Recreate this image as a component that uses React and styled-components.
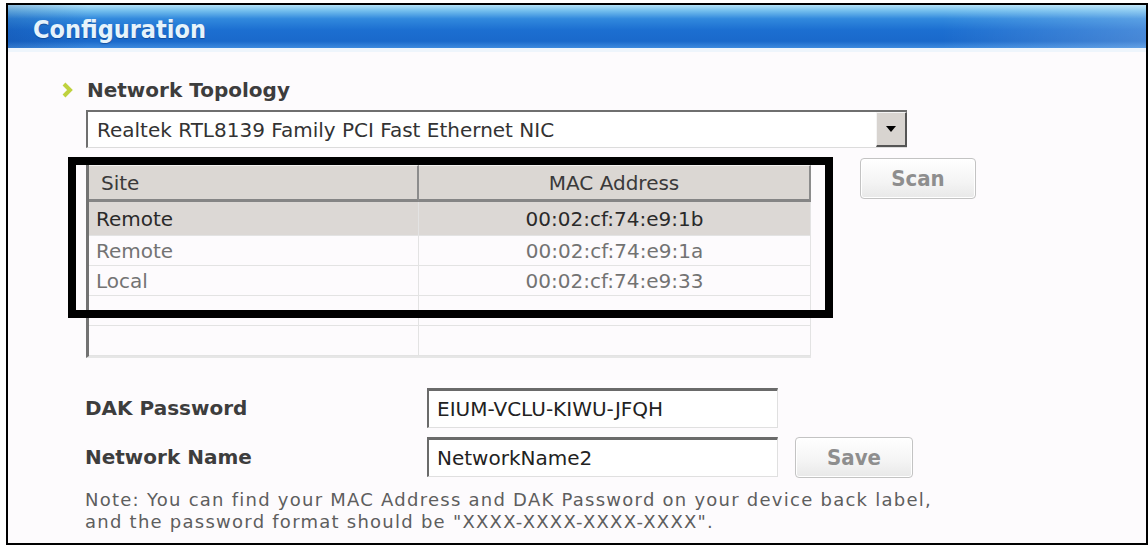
import React from 'react'
import styled, { createGlobalStyle } from 'styled-components'

const GlobalStyle = createGlobalStyle`
  html, body {
    margin: 0;
    padding: 0;
    background: #ffffff;
  }
  body {
    font-family: "DejaVu Sans", Verdana, sans-serif;
  }
`

const Page = styled.div`
  padding: 3px 0 0 6px;
`

const Frame = styled.div`
  box-sizing: border-box;
  width: 1142px;
  height: 542px;
  border: 2px solid #000;
  background: #fdfbfd;
  display: flex;
  flex-direction: column;
`

const Header = styled.div`
  box-sizing: border-box;
  height: 47px;
  border-bottom: 4px solid #eef5fc;
  padding: 5px 0 0 25px;
  display: flex;
  align-items: center;
  background:
    linear-gradient(90deg, rgba(10, 50, 130, 0.2) 0%, rgba(10, 50, 130, 0) 7%, rgba(255, 255, 255, 0) 82%, rgba(255, 255, 255, 0.2) 100%),
    linear-gradient(180deg, #b4e2f8 0%, #74bfee 13%, #3189dd 32%, #1c6fd1 58%, #1a69cb 84%, #3d8ade 100%);
`

const Title = styled.h1`
  margin: 0;
  font-family: "DejaVu Sans Condensed", "DejaVu Sans", sans-serif;
  font-stretch: condensed;
  font-weight: bold;
  font-size: 25px;
  color: #e6f3fb;
  text-shadow: 0 1px 1px rgba(0, 40, 100, 0.45);
`

const Body = styled.div`
  padding: 26px 0 0 54px;
`

const SectionTitle = styled.div`
  display: flex;
  align-items: center;
  gap: 14px;
  font-weight: bold;
  font-size: 20px;
  line-height: 24px;
  color: #3d3d3d;
`

const Section = styled.div`
  padding-left: 23px;
`

const Select = styled.div`
  box-sizing: border-box;
  margin: 8px 0 0 1px;
  width: 821px;
  height: 38px;
  display: flex;
  background: #fff;
  border-top: 2px solid #6f6f6f;
  border-left: 2px solid #6f6f6f;
  border-bottom: 1px solid #dcdcdc;
`

const SelectText = styled.div`
  flex: 1;
  display: flex;
  align-items: center;
  padding-left: 9px;
  font-size: 20px;
  color: #333;
`

const DropButton = styled.div`
  box-sizing: border-box;
  width: 31px;
  display: flex;
  align-items: center;
  justify-content: center;
  background: #d8d4d0;
  border-top: 1px solid #f4f4f4;
  border-left: 1px solid #f4f4f4;
  border-right: 2px solid #555;
  border-bottom: 2px solid #555;
`

const Arrow = styled.span`
  width: 0;
  height: 0;
  border-left: 5px solid transparent;
  border-right: 5px solid transparent;
  border-top: 6px solid #000;
`

const TableRow = styled.div`
  display: flex;
  align-items: flex-start;
  gap: 49px;
  margin: 10px 0 0 1px;
`

const TableWrap = styled.div`
  position: relative;
  margin-top: 7px;
  width: 725px;
`

const Grid = styled.table`
  width: 725px;
  table-layout: fixed;
  border-collapse: separate;
  border-spacing: 0;
  border-left: 3px solid #727272;
  border-bottom: 2px solid #e6e6e6;
  font-size: 20px;
`

const Th = styled.th`
  height: 33px;
  padding: 0 0 0 ${p => (p.$align === 'left' ? '12px' : '0')};
  text-align: ${p => p.$align};
  font-weight: normal;
  color: #3a3a3a;
  background: #dbd7d3;
  border-top: 1px solid #f2f1ef;
  border-bottom: 3px solid #858585;
  border-right: 2px solid #8c8c8c;
`

const Td = styled.td`
  height: ${p => (p.$selected ? '33px' : '29px')};
  padding: 0 0 0 ${p => (p.$align === 'left' ? '7px' : '0')};
  text-align: ${p => p.$align};
  color: ${p => (p.$selected ? '#2a2a2a' : '#737373')};
  background: ${p => (p.$selected ? '#dcd8d5' : 'transparent')};
  border-bottom: 1px solid #e3e3e3;
  border-right: 1px solid #e3e3e3;
`

const Highlight = styled.div`
  position: absolute;
  left: -18px;
  top: -8px;
  width: 765px;
  height: 161px;
  box-sizing: border-box;
  border: 8px solid #000;
  pointer-events: none;
`

const Button = styled.button`
  box-sizing: border-box;
  width: ${p => p.$w}px;
  height: 41px;
  padding: 0;
  border: 1px solid #c3c3c3;
  border-radius: 4px;
  background: linear-gradient(180deg, #ffffff 0%, #f4f4f4 60%, #e8e8e8 100%);
  box-shadow: inset 0 0 0 1px #ffffff;
  font-family: "DejaVu Sans Condensed", "DejaVu Sans", sans-serif;
  font-stretch: condensed;
  font-weight: bold;
  font-size: 22px;
  color: #8e8e8e;
`

const Form = styled.div`
  margin-top: 30px;
  display: grid;
  grid-template-columns: 325px 351px 118px;
  grid-auto-rows: 40px;
  column-gap: 17px;
  row-gap: 9px;
  align-items: center;
`

const Label = styled.div`
  font-weight: bold;
  font-size: 20px;
  color: #3d3d3d;
`

const Field = styled.div`
  box-sizing: border-box;
  height: 40px;
  display: flex;
  align-items: center;
  padding-left: 8px;
  background: #fff;
  border-top: 3px solid #6a6a6a;
  border-left: 2px solid #6a6a6a;
  border-right: 1px solid #e0e0e0;
  border-bottom: 1px solid #e0e0e0;
  font-size: 20px;
  color: #222;
`

const Note = styled.p`
  margin: 12px 0 0;
  font-size: 18px;
  line-height: 22px;
  letter-spacing: 1.25px;
  color: #5e5e5e;
`

const Bullet = () => (
  <svg width="11" height="16" viewBox="0 0 11 16">
    <polyline points="2,2 8,8 2,14" fill="none" stroke="#bfd23e" strokeWidth="4" />
  </svg>
)

const rows = [
  { site: 'Remote', mac: '00:02:cf:74:e9:1b', selected: true },
  { site: 'Remote', mac: '00:02:cf:74:e9:1a' },
  { site: 'Local', mac: '00:02:cf:74:e9:33' },
  { site: '', mac: '' },
  { site: '', mac: '' },
]

export default function App() {
  return (
    <Page>
      <GlobalStyle />
      <Frame>
        <Header>
          <Title>Configuration</Title>
        </Header>
        <Body>
          <SectionTitle>
            <Bullet />
            Network Topology
          </SectionTitle>
          <Section>
            <Select>
              <SelectText>Realtek RTL8139 Family PCI Fast Ethernet NIC</SelectText>
              <DropButton>
                <Arrow />
              </DropButton>
            </Select>
            <TableRow>
              <TableWrap>
                <Grid>
                  <colgroup>
                    <col style={{ width: '330px' }} />
                    <col />
                  </colgroup>
                  <thead>
                    <tr>
                      <Th $align="left">Site</Th>
                      <Th $align="center">MAC Address</Th>
                    </tr>
                  </thead>
                  <tbody>
                    {rows.map((r, i) => (
                      <tr key={i}>
                        <Td $align="left" $selected={r.selected}>{r.site}</Td>
                        <Td $align="center" $selected={r.selected}>{r.mac}</Td>
                      </tr>
                    ))}
                  </tbody>
                </Grid>
                <Highlight />
              </TableWrap>
              <Button $w={116}>Scan</Button>
            </TableRow>
            <Form>
              <Label>DAK Password</Label>
              <Field>EIUM-VCLU-KIWU-JFQH</Field>
              <span />
              <Label>Network Name</Label>
              <Field>NetworkName2</Field>
              <Button $w={118}>Save</Button>
            </Form>
            <Note>
              Note: You can find your MAC Address and DAK Password on your device back label,
              <br />
              and the password format should be "XXXX-XXXX-XXXX-XXXX".
            </Note>
          </Section>
        </Body>
      </Frame>
    </Page>
  )
}
